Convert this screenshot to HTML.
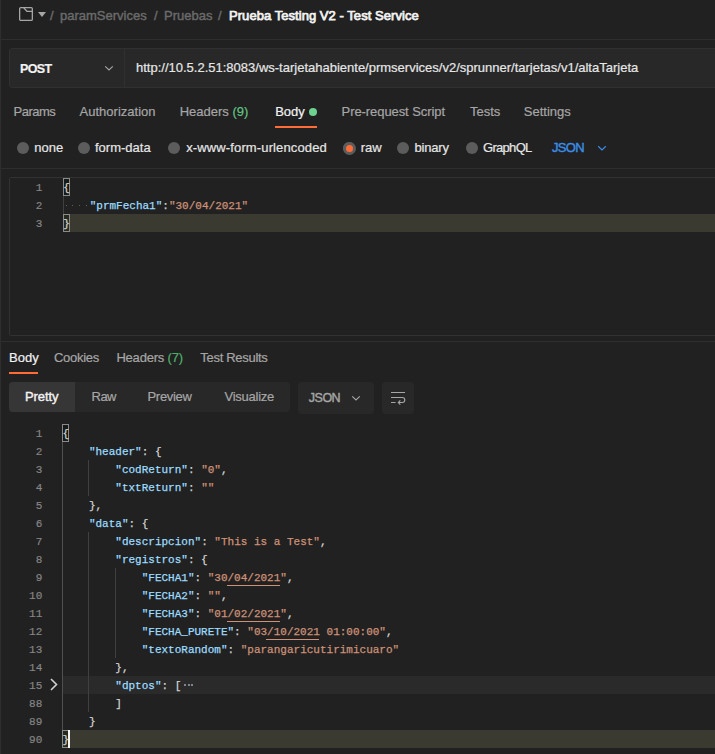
<!DOCTYPE html><html><head><meta charset="utf-8"><style>
html,body{margin:0;padding:0}
html{background:#212121}body{width:715px;height:754px;overflow:hidden;background:#212121;position:relative;font-family:"Liberation Sans",sans-serif;color:#a6a6a6}
.a{position:absolute;white-space:pre;line-height:13px;font-size:13px;-webkit-text-stroke:0.2px currentColor}
.code{position:absolute;white-space:pre;-webkit-text-stroke:0.25px currentColor;font-family:"Liberation Mono",monospace;font-size:11px;letter-spacing:0px;line-height:18px;height:18px;padding-top:1px;box-sizing:border-box}
.k{color:#9cdcfe}.s{color:#ce9178}.p{color:#d4d4d4}
.ln{position:absolute;-webkit-text-stroke:0.2px currentColor;font-family:"Liberation Mono",monospace;font-size:11px;letter-spacing:0px;line-height:18px;padding-top:1px;box-sizing:border-box;height:18px;color:#858585;text-align:right;width:40px;left:2.3px}
.radio{position:absolute;width:12px;height:12px;border-radius:50%;background:#5c5c5c}
.guide{position:absolute;width:1px;background:#404040}
</style></head><body><div style="position:absolute;left:0;top:0;width:1px;height:754px;background:#2e2e2e"></div>
<svg style="position:absolute;left:18px;top:6px" width="16" height="16" viewBox="0 0 16 16"><rect x="1.65" y="1.65" width="12.7" height="12.7" rx="1.2" fill="none" stroke="#a6a6a6" stroke-width="1.3"/><path d="M5.6 1.6 L8.9 5.3 H14.4" fill="none" stroke="#a6a6a6" stroke-width="1.3"/></svg>
<svg style="position:absolute;left:37px;top:11px" width="10" height="7" viewBox="0 0 10 7"><path d="M1 1 H9 L5 6 Z" fill="#a6a6a6"/></svg>
<div class="a" style="left:50px;top:9.00px;font-size:13px;line-height:13px;color:#6b6b6b;font-weight:400;letter-spacing:0px;-webkit-text-stroke:0.4px #6b6b6b;">/</div>
<div class="a" style="left:60px;top:9.00px;font-size:13px;line-height:13px;color:#6b6b6b;font-weight:400;letter-spacing:0px;-webkit-text-stroke:0.4px #6b6b6b;">paramServices</div>
<div class="a" style="left:154px;top:9.00px;font-size:13px;line-height:13px;color:#6b6b6b;font-weight:400;letter-spacing:0px;-webkit-text-stroke:0.4px #6b6b6b;">/</div>
<div class="a" style="left:164px;top:9.00px;font-size:13px;line-height:13px;color:#6b6b6b;font-weight:400;letter-spacing:0px;-webkit-text-stroke:0.4px #6b6b6b;">Pruebas</div>
<div class="a" style="left:218px;top:9.00px;font-size:13px;line-height:13px;color:#6b6b6b;font-weight:400;letter-spacing:0px;-webkit-text-stroke:0.4px #6b6b6b;">/</div>
<div class="a" style="left:229px;top:9.00px;font-size:13px;line-height:13px;color:#f2f2f2;font-weight:400;letter-spacing:0.05px;-webkit-text-stroke:0.75px #f2f2f2;">Prueba Testing V2 - Test Service</div>
<div style="position:absolute;left:1px;top:39px;width:714px;height:1px;background:#2e2e2e"></div>
<div style="position:absolute;left:9px;top:48px;width:720px;height:38px;border:1px solid #303030;border-radius:3px;background:#282828"></div>
<div style="position:absolute;left:124px;top:49px;width:1px;height:38px;background:#303030"></div>
<div class="a" style="left:20px;top:62.62px;font-size:12.5px;line-height:12.5px;color:#f2f2f2;font-weight:700;letter-spacing:-0.6px;">POST</div>
<svg style="position:absolute;left:104px;top:65px" width="10" height="6" viewBox="0 0 10 6"><path d="M1.2 1.3 L5 5 L8.8 1.3" fill="none" stroke="#a6a6a6" stroke-width="1.1"/></svg>
<div class="a" style="left:136px;top:60.60px;font-size:13px;line-height:13px;color:#e6e6e6;font-weight:400;letter-spacing:0px;">http://10.5.2.51:8083/ws-tarjetahabiente/prmservices/v2/sprunner/tarjetas/v1/altaTarjeta</div>
<div class="a" style="left:13.5px;top:105.00px;font-size:13px;line-height:13px;color:#a6a6a6;font-weight:400;letter-spacing:-0.5px;">Params</div>
<div class="a" style="left:79.6px;top:105.00px;font-size:13px;line-height:13px;color:#a6a6a6;font-weight:400;letter-spacing:0px;">Authorization</div>
<div class="a" style="left:179.7px;top:105.00px;font-size:13px;line-height:13px;color:#a6a6a6;font-weight:400;letter-spacing:0px;">Headers <span style="color:#62c584">(9)</span></div>
<div class="a" style="left:275.2px;top:105.00px;font-size:13px;line-height:13px;color:#f2f2f2;font-weight:400;letter-spacing:0px;">Body</div>
<div style="position:absolute;left:309px;top:108px;width:8px;height:8px;border-radius:50%;background:#6dd28f"></div>
<div style="position:absolute;left:275px;top:126px;width:42px;height:2px;background:#ff6c37"></div>
<div class="a" style="left:341.6px;top:105.00px;font-size:13px;line-height:13px;color:#a6a6a6;font-weight:400;letter-spacing:-0.08px;">Pre-request Script</div>
<div class="a" style="left:470px;top:105.00px;font-size:13px;line-height:13px;color:#a6a6a6;font-weight:400;letter-spacing:0px;">Tests</div>
<div class="a" style="left:523.8px;top:105.00px;font-size:13px;line-height:13px;color:#a6a6a6;font-weight:400;letter-spacing:0px;">Settings</div>
<div class="radio" style="left:17px;top:142px"></div>
<div class="radio" style="left:77.5px;top:142px"></div>
<div class="radio" style="left:168px;top:142px"></div>
<div class="radio" style="left:343px;top:142px"></div>
<div class="radio" style="left:397px;top:142px"></div>
<div class="radio" style="left:466px;top:142px"></div>
<div style="position:absolute;left:343px;top:142px;width:13px;height:13px;border-radius:50%;background:#5c5c5c"><div style="position:absolute;left:2.75px;top:2.75px;width:7.5px;height:7.5px;border-radius:50%;background:#ff6c37"></div></div>
<div class="a" style="left:34.3px;top:140.50px;font-size:13px;line-height:13px;color:#e6e6e6;font-weight:400;letter-spacing:0px;">none</div>
<div class="a" style="left:95px;top:140.50px;font-size:13px;line-height:13px;color:#e6e6e6;font-weight:400;letter-spacing:0px;">form-data</div>
<div class="a" style="left:186.2px;top:140.50px;font-size:13px;line-height:13px;color:#e6e6e6;font-weight:400;letter-spacing:0.13px;">x-www-form-urlencoded</div>
<div class="a" style="left:360.7px;top:140.50px;font-size:13px;line-height:13px;color:#e6e6e6;font-weight:400;letter-spacing:0px;">raw</div>
<div class="a" style="left:414.6px;top:140.50px;font-size:13px;line-height:13px;color:#e6e6e6;font-weight:400;letter-spacing:-0.2px;">binary</div>
<div class="a" style="left:483px;top:140.50px;font-size:13px;line-height:13px;color:#e6e6e6;font-weight:400;letter-spacing:-0.7px;">GraphQL</div>
<div class="a" style="left:551.9px;top:140.50px;font-size:13px;line-height:13px;color:#3a8ee6;font-weight:400;letter-spacing:-0.6px;-webkit-text-stroke:0.4px #3a8ee6;">JSON</div>
<svg style="position:absolute;left:597px;top:145px" width="10" height="6" viewBox="0 0 10 6"><path d="M1.2 1.3 L5 5 L8.8 1.3" fill="none" stroke="#3a8ee6" stroke-width="1.2"/></svg>
<div style="position:absolute;left:1px;top:168px;width:714px;height:1px;background:#2e2e2e"></div>
<div style="position:absolute;left:9px;top:177px;width:720px;height:157px;border:1px solid #323232;border-radius:1.5px"></div>
<div class="ln" style="top:178px">1</div>
<div class="ln" style="top:196px">2</div>
<div class="ln" style="top:214px">3</div>
<div style="position:absolute;left:70px;top:214px;width:650px;height:18px;background:#3a3a30"></div>
<div style="position:absolute;left:63px;top:178px;width:5px;height:16px;border:1px solid #8a8a8a;background:#161c15"></div>
<div style="position:absolute;left:63px;top:214px;width:5px;height:16px;border:1px solid #8a8a8a;background:#262b1f"></div>
<div class="code" style="left:63.3px;top:178px"><span class="p">{</span></div>
<div class="guide" style="left:63px;top:196px;height:18px;background:#404040"></div>
<div style="position:absolute;left:66px;top:205px;width:1px;height:1px;background:#606050"></div>
<div style="position:absolute;left:72px;top:205px;width:1px;height:1px;background:#606050"></div>
<div style="position:absolute;left:79px;top:205px;width:1px;height:1px;background:#606050"></div>
<div style="position:absolute;left:86px;top:205px;width:1px;height:1px;background:#606050"></div>
<div class="code" style="left:89.69999999999999px;top:196px"><span class="k">"prmFecha1"</span><span class="p">:</span><span class="s">"30/04/2021"</span></div>
<div class="code" style="left:63.3px;top:214px"><span class="p">}</span></div>
<div style="position:absolute;left:1px;top:341px;width:714px;height:1px;background:#2e2e2e"></div>
<div class="a" style="left:9px;top:350.70px;font-size:13px;line-height:13px;color:#f2f2f2;font-weight:400;letter-spacing:0px;">Body</div>
<div style="position:absolute;left:9px;top:372px;width:29px;height:2px;background:#ff6c37"></div>
<div class="a" style="left:54px;top:350.70px;font-size:13px;line-height:13px;color:#a6a6a6;font-weight:400;letter-spacing:-0.28px;">Cookies</div>
<div class="a" style="left:116.4px;top:350.70px;font-size:13px;line-height:13px;color:#a6a6a6;font-weight:400;letter-spacing:-0.2px;">Headers <span style="color:#4fb06a">(7)</span></div>
<div class="a" style="left:200.3px;top:350.70px;font-size:13px;line-height:13px;color:#a6a6a6;font-weight:400;letter-spacing:-0.3px;">Test Results</div>
<div style="position:absolute;left:9px;top:382px;width:281px;height:30px;border-radius:4px;background:#282828"></div>
<div style="position:absolute;left:9px;top:382px;width:66px;height:30px;border-radius:4px 0 0 4px;background:#363636"></div>
<div class="a" style="left:25px;top:390.00px;font-size:13px;line-height:13px;color:#f2f2f2;font-weight:400;letter-spacing:-0.1px;-webkit-text-stroke:0.4px #f2f2f2;">Pretty</div>
<div class="a" style="left:91.5px;top:390.00px;font-size:13px;line-height:13px;color:#a6a6a6;font-weight:400;letter-spacing:-0.5px;">Raw</div>
<div class="a" style="left:147.5px;top:390.00px;font-size:13px;line-height:13px;color:#a6a6a6;font-weight:400;letter-spacing:-0.3px;">Preview</div>
<div class="a" style="left:224.5px;top:390.00px;font-size:13px;line-height:13px;color:#a6a6a6;font-weight:400;letter-spacing:-0.25px;">Visualize</div>
<div style="position:absolute;left:298px;top:382px;width:76px;height:32px;border-radius:4px;background:#282828"></div>
<div class="a" style="left:308.8px;top:391.92px;font-size:12.5px;line-height:12.5px;color:#a6a6a6;font-weight:400;letter-spacing:-0.5px;-webkit-text-stroke:0.4px #a6a6a6;">JSON</div>
<svg style="position:absolute;left:351px;top:395px" width="10" height="6" viewBox="0 0 10 6"><path d="M1.2 1.3 L5 5 L8.8 1.3" fill="none" stroke="#a6a6a6" stroke-width="1.1"/></svg>
<div style="position:absolute;left:382px;top:382px;width:32px;height:32px;border-radius:4px;background:#282828"></div>
<svg style="position:absolute;left:389px;top:390px" width="18" height="16" viewBox="0 0 18 16"><path d="M2 2.5 H16 M2 7.5 H13.3 a2.5 2.5 0 0 1 0 5 H9.6 M2 12.5 H6.6" fill="none" stroke="#a6a6a6" stroke-width="1.1"/><path d="M11.3 10.4 L9.3 12.5 L11.3 14.6" fill="none" stroke="#a6a6a6" stroke-width="1.1"/></svg>
<div style="position:absolute;left:62px;top:676px;width:660px;height:18px;background:#2a2a2a"></div>
<div style="position:absolute;left:69px;top:730px;width:660px;height:18px;background:#3a3a30"></div>
<div class="guide" style="left:62.0px;top:442px;height:288px;background:#505050"></div>
<div class="guide" style="left:88.0px;top:460px;height:36px;background:#404040"></div>
<div class="guide" style="left:88.0px;top:532px;height:180px;background:#404040"></div>
<div class="guide" style="left:115.0px;top:568px;height:90px;background:#404040"></div>
<div style="position:absolute;left:62px;top:424px;width:5px;height:16px;border:1px solid #8a8a8a;background:#161c15"></div>
<div style="position:absolute;left:62px;top:730px;width:5px;height:16px;border:1px solid #8a8a8a;background:#262b1f"></div>
<div class="ln" style="top:424px">1</div>
<div class="code" style="left:62.5px;top:424px"><span class="p">{</span></div>
<div class="ln" style="top:442px">2</div>
<div class="code" style="left:88.9px;top:442px"><span class="k">"header"</span><span class="p">: {</span></div>
<div class="ln" style="top:460px">3</div>
<div class="code" style="left:115.3px;top:460px"><span class="k">"codReturn"</span><span class="p">: </span><span class="s">"0"</span><span class="p">,</span></div>
<div class="ln" style="top:478px">4</div>
<div class="code" style="left:115.3px;top:478px"><span class="k">"txtReturn"</span><span class="p">: </span><span class="s">""</span></div>
<div class="ln" style="top:496px">5</div>
<div class="code" style="left:88.9px;top:496px"><span class="p">},</span></div>
<div class="ln" style="top:514px">6</div>
<div class="code" style="left:88.9px;top:514px"><span class="k">"data"</span><span class="p">: {</span></div>
<div class="ln" style="top:532px">7</div>
<div class="code" style="left:115.3px;top:532px"><span class="k">"descripcion"</span><span class="p">: </span><span class="s">"This is a Test"</span><span class="p">,</span></div>
<div class="ln" style="top:550px">8</div>
<div class="code" style="left:115.3px;top:550px"><span class="k">"registros"</span><span class="p">: {</span></div>
<div class="ln" style="top:568px">9</div>
<div class="code" style="left:141.7px;top:568px"><span class="k">"FECHA1"</span><span class="p">: </span><span class="s">"30/04/2021"</span><span class="p">,</span></div>
<div class="ln" style="top:586px">10</div>
<div class="code" style="left:141.7px;top:586px"><span class="k">"FECHA2"</span><span class="p">: </span><span class="s">""</span><span class="p">,</span></div>
<div class="ln" style="top:604px">11</div>
<div class="code" style="left:141.7px;top:604px"><span class="k">"FECHA3"</span><span class="p">: </span><span class="s">"01/02/2021"</span><span class="p">,</span></div>
<div class="ln" style="top:622px">12</div>
<div class="code" style="left:141.7px;top:622px"><span class="k">"FECHA_PURETE"</span><span class="p">: </span><span class="s">"03/10/2021 01:00:00"</span><span class="p">,</span></div>
<div class="ln" style="top:640px">13</div>
<div class="code" style="left:141.7px;top:640px"><span class="k">"textoRandom"</span><span class="p">: </span><span class="s">"parangaricutirimicuaro"</span></div>
<div class="ln" style="top:658px">14</div>
<div class="code" style="left:115.3px;top:658px"><span class="p">},</span></div>
<div class="ln" style="top:676px">15</div>
<div class="code" style="left:115.3px;top:676px"><span class="k">"dptos"</span><span class="p">: [</span></div>
<div class="ln" style="top:694px">88</div>
<div class="code" style="left:115.3px;top:694px"><span class="p">]</span></div>
<div class="ln" style="top:712px">89</div>
<div class="code" style="left:88.9px;top:712px"><span class="p">}</span></div>
<div class="ln" style="top:730px">90</div>
<div class="code" style="left:62.5px;top:730px"><span class="p">}</span></div>
<div style="position:absolute;left:226.8px;top:585px;width:52.8px;height:1px;background:#ce9178"></div>
<div style="position:absolute;left:226.8px;top:621px;width:52.8px;height:1px;background:#ce9178"></div>
<div style="position:absolute;left:266.4px;top:639px;width:52.8px;height:1px;background:#ce9178"></div>
<svg style="position:absolute;left:49px;top:678.3px" width="10" height="13" viewBox="0 0 10 13"><path d="M2 1 L7.5 6.5 L2 12" fill="none" stroke="#d0d0d0" stroke-width="1.6"/></svg>
<div style="position:absolute;left:184px;top:684px;width:1.5px;height:1.5px;background:#7d8690"></div>
<div style="position:absolute;left:188px;top:684px;width:1.5px;height:1.5px;background:#7d8690"></div>
<div style="position:absolute;left:191px;top:684px;width:1.5px;height:1.5px;background:#7d8690"></div>
<div style="position:absolute;left:68px;top:730px;width:2px;height:18px;background:#f4f4f4"></div></body></html>
